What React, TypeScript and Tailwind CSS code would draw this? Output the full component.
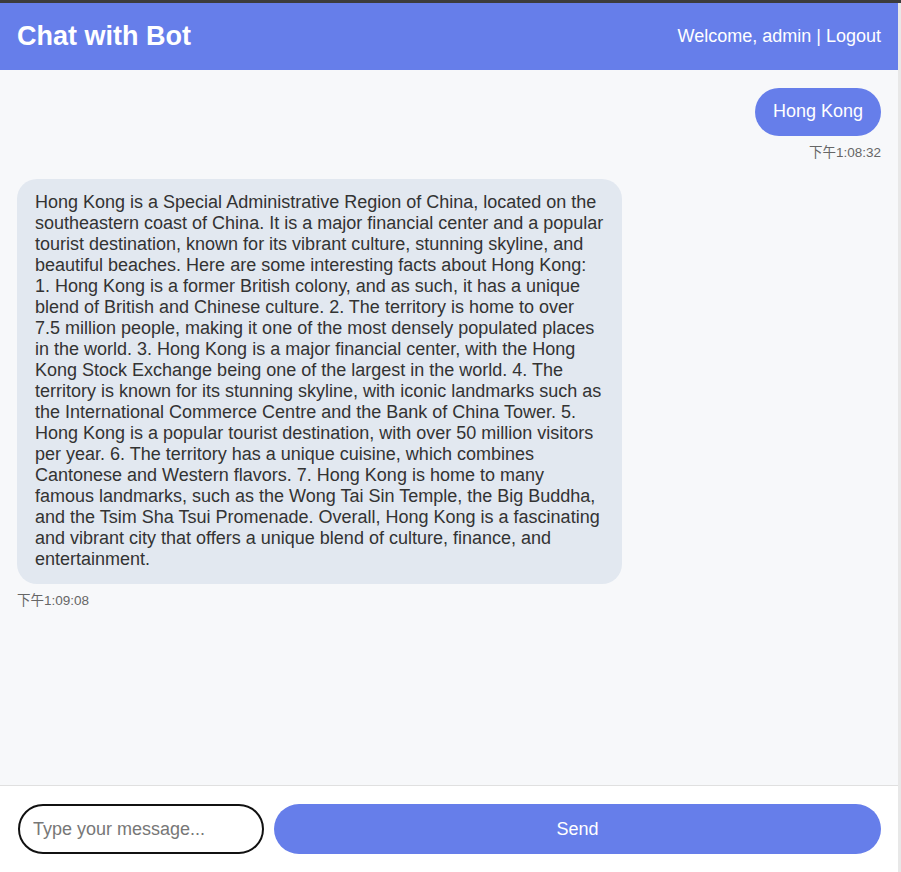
import React from "react";

const botText =
  "Hong Kong is a Special Administrative Region of China, located on the southeastern coast of China. It is a major financial center and a popular tourist destination, known for its vibrant culture, stunning skyline, and beautiful beaches. Here are some interesting facts about Hong Kong: 1. Hong Kong is a former British colony, and as such, it has a unique blend of British and Chinese culture. 2. The territory is home to over 7.5 million people, making it one of the most densely populated places in the world. 3. Hong Kong is a major financial center, with the Hong Kong Stock Exchange being one of the largest in the world. 4. The territory is known for its stunning skyline, with iconic landmarks such as the International Commerce Centre and the Bank of China Tower. 5. Hong Kong is a popular tourist destination, with over 50 million visitors per year. 6. The territory has a unique cuisine, which combines Cantonese and Western flavors. 7. Hong Kong is home to many famous landmarks, such as the Wong Tai Sin Temple, the Big Buddha, and the Tsim Sha Tsui Promenade. Overall, Hong Kong is a fascinating and vibrant city that offers a unique blend of culture, finance, and entertainment.";

export default function App() {
  return (
    <div
      className="flex flex-col h-[872px] w-[901px] overflow-hidden bg-white"
      style={{ fontFamily: '"Liberation Sans", Arial, "Noto Sans CJK SC", sans-serif' }}
    >
      <div className="h-[3px] bg-[#3c3c3c] shrink-0" />
      <div className="flex flex-1 min-h-0">
        <div className="flex flex-col w-[898px] min-h-0">
          <header className="h-[67px] shrink-0 bg-[#667eea] flex items-center justify-between px-[17px] text-white">
            <h1 className="text-[27px] font-bold leading-[31px]">Chat with Bot</h1>
            <div className="text-[18px] leading-[21px]">Welcome, admin | Logout</div>
          </header>
          <main className="flex-1 min-h-0 bg-[#f7f8fa] px-[17px] pt-[18px]">
            <div className="flex flex-col items-end mb-[18px]">
              <div className="bg-[#667eea] text-white text-[18px] leading-[21px] px-[18px] pt-[13px] pb-[14px] rounded-[24px] max-w-[70%]">
                Hong Kong
              </div>
              <div className="mt-[9px] text-[13.5px] leading-[16px] text-[#666]">下午1:08:32</div>
            </div>
            <div className="flex flex-col items-start mb-5">
              <div className="bg-[#e2e8f0] text-[#333] text-[18px] leading-[21px] px-[18px] pt-[13px] pb-[14px] rounded-[20px] max-w-[70%]">
                {botText}
              </div>
              <div className="mt-[9px] text-[13.5px] leading-[16px] text-[#666]">下午1:09:08</div>
            </div>
          </main>
          <footer className="h-[87px] shrink-0 border-t border-[#e0e0e0] bg-white flex items-start gap-[10px] pl-[18px] pr-[17px] pt-[18px]">
            <input
              className="w-[246px] h-[50px] border-2 border-[#111] rounded-full px-[13px] text-[18px] text-[#333] placeholder:text-[#777] outline-none"
              placeholder="Type your message..."
            />
            <button className="flex-1 h-[50px] rounded-full bg-[#667eea] text-white text-[18px]">
              Send
            </button>
          </footer>
        </div>
        <div className="w-[3px] bg-[#e8e8e8]" />
      </div>
    </div>
  );
}
